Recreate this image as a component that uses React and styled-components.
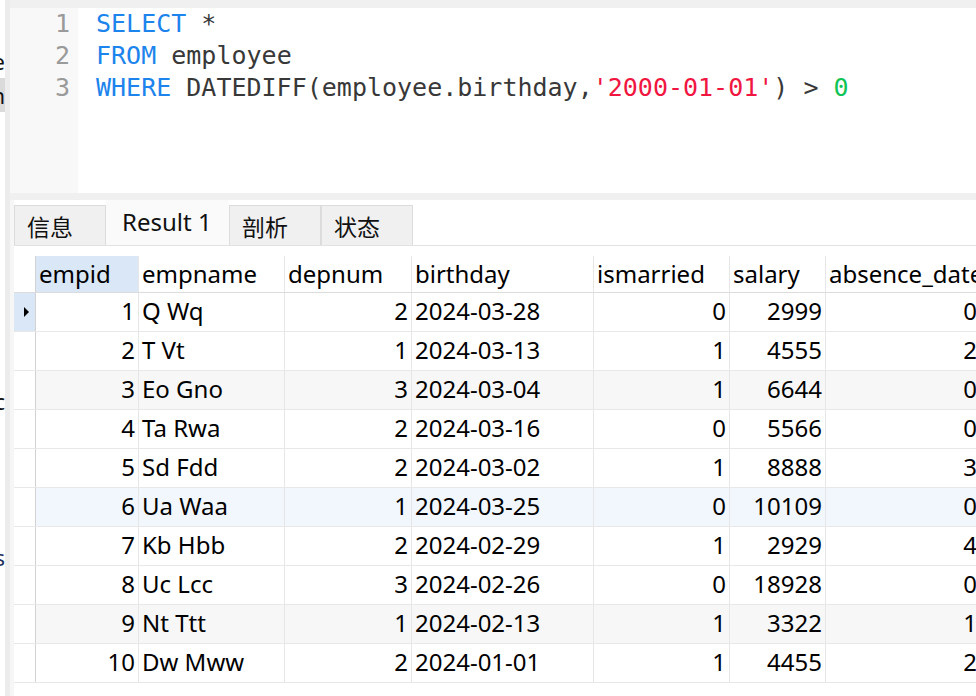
import React from "react";
import styled, { createGlobalStyle } from "styled-components";

const GlobalStyle = createGlobalStyle`
  html, body {
    margin: 0;
    padding: 0;
    background: #f0f0f0;
    overflow: hidden;
  }
`;

const sidebarItems = [
  { text: "employee", gap: 44 },
  { text: "departmen", gap: 0, selected: true },
  { text: "proc", gap: 272 },
  { text: "views", gap: 122, color: "#1b2d5c" },
];

const sqlLines = [
  [
    { t: "SELECT", k: "kw" },
    { t: " *", k: "id" },
  ],
  [
    { t: "FROM", k: "kw" },
    { t: " employee", k: "id" },
  ],
  [
    { t: "WHERE", k: "kw" },
    { t: " DATEDIFF(employee.birthday,", k: "id" },
    { t: "'2000-01-01'", k: "str" },
    { t: ") > ", k: "id" },
    { t: "0", k: "num" },
  ],
];

const tokenColors = {
  kw: "#1c84ec",
  id: "#383838",
  str: "#f0163f",
  num: "#10c455",
};

const tabs = [
  { label: "信息" },
  { label: "Result 1", active: true },
  { label: "剖析" },
  { label: "状态" },
];

const columns = [
  { key: "empid", width: 103, align: "right" },
  { key: "empname", width: 146, align: "left" },
  { key: "depnum", width: 127, align: "right" },
  { key: "birthday", width: 182, align: "left" },
  { key: "ismarried", width: 136, align: "right" },
  { key: "salary", width: 96, align: "right" },
  { key: "absence_date", width: 155, align: "right" },
];

const rows = [
  [1, "Q Wq", 2, "2024-03-28", 0, 2999, 0],
  [2, "T Vt", 1, "2024-03-13", 1, 4555, 2],
  [3, "Eo Gno", 3, "2024-03-04", 1, 6644, 0],
  [4, "Ta Rwa", 2, "2024-03-16", 0, 5566, 0],
  [5, "Sd Fdd", 2, "2024-03-02", 1, 8888, 3],
  [6, "Ua Waa", 1, "2024-03-25", 0, 10109, 0],
  [7, "Kb Hbb", 2, "2024-02-29", 1, 2929, 4],
  [8, "Uc Lcc", 3, "2024-02-26", 0, 18928, 0],
  [9, "Nt Ttt", 1, "2024-02-13", 1, 3322, 1],
  [10, "Dw Mww", 2, "2024-01-01", 1, 4455, 2],
];

const rowTones = { 3: "grey", 6: "blue", 9: "grey" };

const toneBg = {
  grey: "#f7f7f7",
  blue: "#f2f7fd",
};

const gridTemplate = `22px ${columns.map((c) => `${c.width}px`).join(" ")}`;

const Shell = styled.div`
  display: flex;
  width: 976px;
  height: 696px;
  overflow: hidden;
  font-family: "Noto Sans", "Noto Sans CJK SC", sans-serif;
`;

const Sidebar = styled.div`
  width: 5px;
  flex-shrink: 0;
  background: #ffffff;
  border-right: 5px solid #ececec;
  display: flex;
  flex-direction: column;
  overflow: hidden;
`;

const SideItem = styled.div`
  height: 34px;
  margin-top: ${(p) => p.$gap}px;
  display: flex;
  justify-content: flex-end;
  align-items: center;
  white-space: nowrap;
  font-size: 22px;
  color: ${(p) => p.$color || "#111111"};
  background: ${(p) => (p.$selected ? "#dadada" : "transparent")};
`;

const Main = styled.div`
  flex: 1;
  min-width: 0;
  display: flex;
  flex-direction: column;
  padding-top: 8px;
  overflow: hidden;
`;

const Editor = styled.div`
  height: 185px;
  display: flex;
  background: #ffffff;
  font-family: "DejaVu Sans Mono", "Liberation Mono", monospace;
  font-size: 25px;
  line-height: 32px;
  flex-shrink: 0;
`;

const Gutter = styled.div`
  width: 68px;
  box-sizing: border-box;
  padding: 0 8px 0 0;
  background: #f8f8f8;
  color: #9a9a9a;
  text-align: right;
`;

const Code = styled.div`
  flex: 1;
  padding: 0 0 0 18px;
  white-space: pre;
`;

const Token = styled.span`
  color: ${(p) => tokenColors[p.$kind]};
`;

const Results = styled.div`
  flex: 1;
  margin-top: 7px;
  background: #ffffff;
  border-left: 4px solid #f6f6f6;
  display: flex;
  flex-direction: column;
  overflow: hidden;
`;

const TabBar = styled.div`
  height: 45px;
  display: flex;
  align-items: flex-end;
  border-bottom: 1px solid #e2e2e2;
  flex-shrink: 0;
`;

const Tab = styled.div`
  height: ${(p) => (p.$active ? 45 : 40)}px;
  min-width: ${(p) => (p.$active ? 123 : 92)}px;
  box-sizing: border-box;
  padding: 0 0 ${(p) => (p.$active ? 3 : 0)}px ${(p) => (p.$active ? 16 : 12)}px;
  display: flex;
  align-items: center;
  background: ${(p) => (p.$active ? "#fafafa" : "#f0f0f0")};
  border: ${(p) => (p.$active ? "none" : "1px solid #dcdcdc")};
  border-bottom: none;
  font-size: ${(p) => (p.$active ? 24 : 23)}px;
  color: #111111;
`;

const Grid = styled.div`
  margin-top: 10px;
  font-size: 24px;
  color: #000000;
`;

const Row = styled.div`
  display: grid;
  grid-template-columns: ${gridTemplate};
  height: ${(p) => (p.$header ? 37 : 39)}px;
  box-sizing: border-box;
  border-bottom: 1px solid ${(p) => (p.$header ? "#dcdcdc" : "#e8e8e8")};
`;

const Cell = styled.div`
  box-sizing: border-box;
  padding: 0 3px;
  border-right: 1px solid #e6e6e6;
  text-align: ${(p) => p.$align};
  white-space: nowrap;
  overflow: hidden;
  line-height: ${(p) => (p.$header ? 36 : 35)}px;
  background: ${(p) => (p.$highlight ? "#d9e7f6" : toneBg[p.$tone] || "transparent")};
`;

const RowHead = styled.div`
  box-sizing: border-box;
  border-right: 1px solid #d2d2d2;
  display: flex;
  align-items: center;
  justify-content: center;
  padding-left: 3px;
  background: ${(p) => (p.$current ? "#d9e7f6" : "#ffffff")};
`;

const Pointer = styled.div`
  width: 0;
  height: 0;
  border-top: 5px solid transparent;
  border-bottom: 5px solid transparent;
  border-left: 5px solid #000000;
`;

export default function App() {
  return (
    <>
      <GlobalStyle />
      <Shell>
        <Sidebar>
          {sidebarItems.map((item) => (
            <SideItem
              key={item.text}
              $gap={item.gap}
              $selected={item.selected}
              $color={item.color}
            >
              {item.text}
            </SideItem>
          ))}
        </Sidebar>
        <Main>
          <Editor>
            <Gutter>
              {sqlLines.map((_, i) => (
                <div key={i}>{i + 1}</div>
              ))}
            </Gutter>
            <Code>
              {sqlLines.map((line, i) => (
                <div key={i}>
                  {line.map((tok, j) => (
                    <Token key={j} $kind={tok.k}>
                      {tok.t}
                    </Token>
                  ))}
                </div>
              ))}
            </Code>
          </Editor>
          <Results>
            <TabBar>
              {tabs.map((tab) => (
                <Tab key={tab.label} $active={tab.active}>
                  {tab.label}
                </Tab>
              ))}
            </TabBar>
            <Grid>
              <Row $header>
                <RowHead />
                {columns.map((col, i) => (
                  <Cell key={col.key} $align="left" $header $highlight={i === 0}>
                    {col.key}
                  </Cell>
                ))}
              </Row>
              {rows.map((row, idx) => (
                <Row key={row[0]}>
                  <RowHead $current={idx === 0}>{idx === 0 && <Pointer />}</RowHead>
                  {row.map((val, i) => (
                    <Cell
                      key={columns[i].key}
                      $align={columns[i].align}
                      $tone={rowTones[row[0]]}
                    >
                      {val}
                    </Cell>
                  ))}
                </Row>
              ))}
            </Grid>
          </Results>
        </Main>
      </Shell>
    </>
  );
}
